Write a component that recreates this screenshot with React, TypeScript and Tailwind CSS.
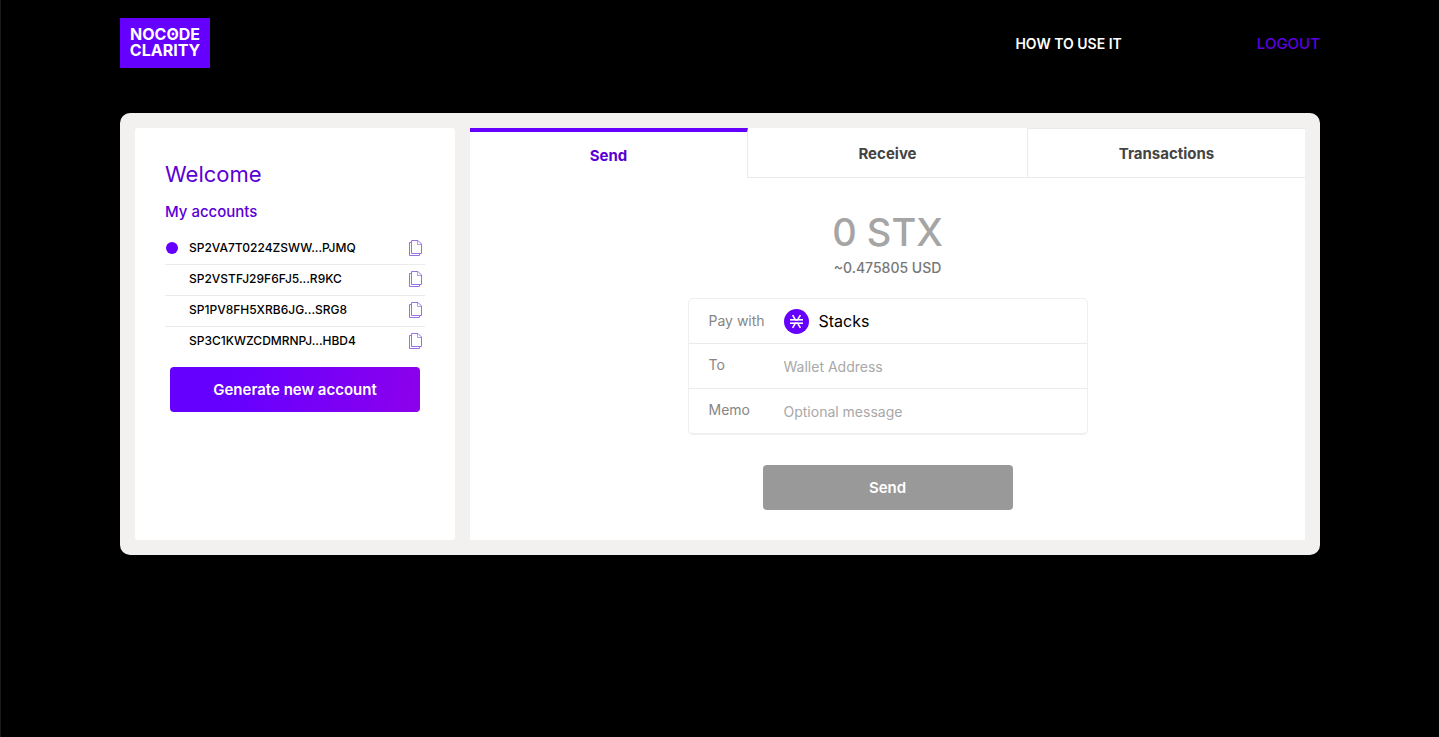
import { useState } from "react";

const accounts = [
  "SP2VA7T0224ZSWW...PJMQ",
  "SP2VSTFJ29F6FJ5...R9KC",
  "SP1PV8FH5XRB6JG...SRG8",
  "SP3C1KWZCDMRNPJ...HBD4",
];

function Logo() {
  return (
    <a
      href="#home"
      className="flex h-[50px] w-[90px] flex-col items-center justify-center bg-[#6500ff] pb-[2px] text-[16px] leading-[16px] font-bold text-white"
    >
      <span className="relative">
        NOCODE
        <svg
          className="absolute top-[6px] left-[41px]"
          width="4"
          height="4"
          viewBox="0 0 4 4"
          aria-hidden="true"
        >
          <circle cx="2" cy="2" r="1.4" fill="#fff" />
        </svg>
      </span>
      <span>CLARITY</span>
    </a>
  );
}

function CopyIcon() {
  return (
    <svg width="14" height="16" viewBox="0 0 14 16" fill="none" stroke="#9a72e2" strokeWidth="1" aria-hidden="true">
      <path d="M3.5 0.5H10L13.5 4V13.5H3.5Z" />
      <path d="M9.5 0.5V4.5H13.5" strokeOpacity="0.7" />
      <path d="M3.5 2.5H1.5V15.5H11.5V13.5" />
    </svg>
  );
}

function StacksIcon() {
  return (
    <svg width="25" height="25" viewBox="0 0 25 25" aria-hidden="true">
      <circle cx="12.5" cy="12.5" r="12.5" fill="#6500ff" />
      <g stroke="#fff" strokeWidth="1.6" fill="none">
        <path d="M6 10.8H19" />
        <path d="M6 14.2H19" />
        <path d="M8.6 6.2L11.4 10.8H13.6L16.4 6.2" />
        <path d="M8.6 18.8L11.4 14.2H13.6L16.4 18.8" />
      </g>
    </svg>
  );
}

function Accounts() {
  const [selected, setSelected] = useState(0);
  return (
    <section className="w-[320px] shrink-0 rounded-[3px] bg-white p-[30px]">
      <h1 className="text-[22px] leading-8 text-[#5a00d6]">Welcome</h1>
      <h2 className="mt-[10px] text-[15px] leading-6 font-medium text-[#5a00d6]">My accounts</h2>
      <ul className="mt-[10px]">
        {accounts.map((account, i) => (
          <li
            key={account}
            className="flex h-[31px] items-center justify-between border-b border-[#ebebeb] pr-[3px] pb-[2px] last:border-transparent"
          >
            <button
              type="button"
              onClick={() => setSelected(i)}
              className="flex items-center gap-[11px] pl-px text-[12px] leading-4 font-medium text-black"
            >
              <span className={i === selected ? "size-3 rounded-full bg-[#6500ff]" : "size-3"} />
              {account}
            </button>
            <button type="button" aria-label="Copy address">
              <CopyIcon />
            </button>
          </li>
        ))}
      </ul>
      <div className="mt-[9px] px-[5px]">
        <button
          type="button"
          className="h-[45px] w-full rounded-[4px] bg-linear-[100deg] from-[#6500ff] from-25% to-[#8d00ec] pt-[2px] text-[15px] font-semibold text-white"
        >
          Generate new account
        </button>
      </div>
    </section>
  );
}

function Tabs() {
  return (
    <div role="tablist" className="grid h-[50px] grid-cols-[278fr_280fr_277fr] text-[15px] font-bold text-[#444444]">
      <button
        type="button"
        role="tab"
        aria-selected="true"
        className="border-t-4 border-r border-t-[#6500ff] border-r-[#ebebeb] pt-[2px] text-[#5a00d6]"
      >
        Send
      </button>
      <button type="button" role="tab" aria-selected="false" className="border-r border-b border-[#ebebeb] pt-[3px]">
        Receive
      </button>
      <button type="button" role="tab" aria-selected="false" className="border-t border-b border-[#ebebeb] pt-[2px]">
        Transactions
      </button>
    </div>
  );
}

function SendForm() {
  return (
    <form className="flex flex-col items-center px-[30px] py-[30px]">
      <p className="text-[38px] leading-[48px] font-medium text-[#a5a5a5]">0 STX</p>
      <p className="text-[14px] leading-6 font-medium text-[#777777]">~0.475805 USD</p>
      <div className="mt-[18px] w-full max-w-[400px] divide-y divide-[#ebebeb] rounded-[5px] border border-b-2 border-[#efefef] text-[14px]">
        <div className="flex h-[45px] items-center pl-5">
          <span className="w-[75px] pb-[2px] text-[#868686]">Pay with</span>
          <StacksIcon />
          <span className="pl-[10px] text-[16px] text-black">Stacks</span>
        </div>
        <div className="flex h-[45px] items-center pl-5">
          <label htmlFor="to" className="w-[75px] pb-[4px] text-[#868686]">
            To
          </label>
          <input
            id="to"
            placeholder="Wallet Address"
            className="h-full min-w-0 flex-1 bg-transparent outline-none placeholder:text-[#a8a8a8]"
          />
        </div>
        <div className="flex h-[44px] items-center pl-5">
          <label htmlFor="memo" className="w-[75px] pb-[4px] text-[#868686]">
            Memo
          </label>
          <input
            id="memo"
            placeholder="Optional message"
            className="h-full min-w-0 flex-1 bg-transparent outline-none placeholder:text-[#a8a8a8]"
          />
        </div>
      </div>
      <button
        type="button"
        className="mt-[30px] h-[45px] w-full max-w-[250px] rounded-[4px] bg-[#999999] pt-[2px] text-[15px] font-semibold text-white"
      >
        Send
      </button>
    </form>
  );
}

export default function App() {
  return (
    <div className="min-h-screen border-l border-[#1a1a1a] bg-black font-['Inter',sans-serif]">
      <div className="mx-auto max-w-[1200px] pt-[18px]">
        <header className="flex items-center justify-between">
          <Logo />
          <nav className="flex items-center gap-[135px] pt-[2px]">
            <a href="#how-to" className="text-[14px] leading-5 font-semibold text-white">
              HOW TO USE IT
            </a>
            <a href="#logout" className="text-[15px] leading-5 font-medium text-[#5f00e0]">
              LOGOUT
            </a>
          </nav>
        </header>
        <main className="mt-[45px] flex gap-[15px] rounded-[10px] bg-[#f3f1ef] p-[15px]">
          <Accounts />
          <section className="min-w-0 flex-1 bg-white">
            <Tabs />
            <SendForm />
          </section>
        </main>
      </div>
    </div>
  );
}
